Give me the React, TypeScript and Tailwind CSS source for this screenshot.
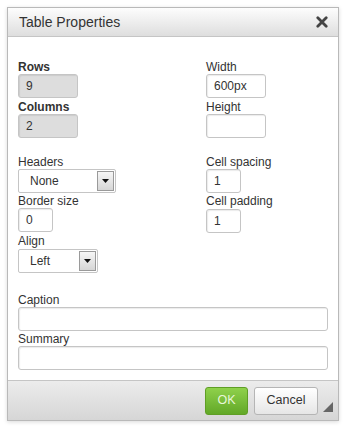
import React from "react";

const font = { fontFamily: '"Liberation Sans", Arial, sans-serif' };

function Label({ children, bold }: { children: React.ReactNode; bold?: boolean }) {
  return (
    <div className={`h-[14px] leading-[14px] text-[12px] text-[#333] ${bold ? "font-bold" : ""}`}>{children}</div>
  );
}

function Input({ w, value, disabled }: { w: string; value?: string; disabled?: boolean }) {
  return (
    <div
      className={`${w} h-[24px] border border-[#c5c5c5] rounded-[3px] flex items-center pl-[7px] text-[12px] text-[#333] shadow-[inset_1px_1px_1px_rgba(0,0,0,0.08)] ${
        disabled ? "bg-[#dddddd]" : "bg-white"
      }`}
    >
      {value}
    </div>
  );
}

function Select({ w, value }: { w: string; value: string }) {
  return (
    <div className={`${w} h-[24px] border border-[#c5c5c5] rounded-[2px] bg-white flex items-center text-[12px] text-[#333]`}>
      <div className="flex-1 pl-[11px]">{value}</div>
      <div className="w-[17px] h-[20px] mr-[1px] border border-[#9a9a9a] bg-gradient-to-b from-[#f6f6f6] to-[#d6d6d6] flex items-center justify-center">
        <svg width="7" height="4" viewBox="0 0 7 4">
          <path d="M0 0 L7 0 L3.5 4 Z" fill="#111" />
        </svg>
      </div>
    </div>
  );
}

export default function App() {
  return (
    <div className="w-[347px] h-[427px] bg-white pt-[7px] pl-[7px]" style={font}>
      <div className="w-[332px] h-[414px] border border-[#b9b9b9] flex flex-col shadow-[0_1px_4px_rgba(0,0,0,0.15)]">
        {/* header */}
        <div className="h-[29px] shrink-0 bg-gradient-to-b from-[#fdfdfd] to-[#dedede] border-b border-[#c5c5c5] flex items-center pl-[11px] pr-[10px]">
          <div className="flex-1 text-[14px] text-[#333]">Table Properties</div>
          <svg width="12" height="12" viewBox="0 0 12 12">
            <path d="M1.8 1.8 L10.2 10.2 M10.2 1.8 L1.8 10.2" stroke="#444" strokeWidth="2.8" strokeLinecap="round" />
          </svg>
        </div>
        {/* body */}
        <div className="flex-1 bg-white pt-[23px] px-[10px]">
          <div className="flex">
            <div className="w-[188px] flex flex-col">
              <Label bold>Rows</Label>
              <Input w="w-[60px]" value="9" disabled />
              <div className="mt-[2px]">
                <Label bold>Columns</Label>
              </div>
              <Input w="w-[60px]" value="2" disabled />
              <div className="mt-[17px]">
                <Label>Headers</Label>
              </div>
              <Select w="w-[98px]" value="None" />
              <div className="mt-[1px]">
                <Label>Border size</Label>
              </div>
              <Input w="w-[35px]" value="0" />
              <div className="mt-[2px]">
                <Label>Align</Label>
              </div>
              <div className="mt-[1px]">
                <Select w="w-[80px]" value="Left" />
              </div>
            </div>
            <div className="flex flex-col">
              <Label>Width</Label>
              <Input w="w-[60px]" value="600px" />
              <div className="mt-[2px]">
                <Label>Height</Label>
              </div>
              <Input w="w-[60px]" />
              <div className="mt-[17px]">
                <Label>Cell spacing</Label>
              </div>
              <Input w="w-[35px]" value="1" />
              <div className="mt-[1px]">
                <Label>Cell padding</Label>
              </div>
              <div className="mt-[1px]">
                <Input w="w-[35px]" value="1" />
              </div>
            </div>
          </div>
          <div className="mt-[20px]">
            <Label>Caption</Label>
          </div>
          <Input w="w-[310px]" />
          <div className="mt-[1px]">
            <Label>Summary</Label>
          </div>
          <Input w="w-[310px]" />
        </div>
        {/* footer */}
        <div className="h-[40px] shrink-0 bg-gradient-to-b from-[#ececec] to-[#d6d6d6] border-t border-[#c5c5c5] flex items-center justify-end pr-[20px] relative">
          <div className="w-[43px] h-[28px] rounded-[3px] border border-[#5f9e25] bg-gradient-to-b from-[#8fd14b] to-[#62a827] flex items-center justify-center text-[12.5px] text-[#e8f6d8]">
            OK
          </div>
          <div className="ml-[6px] w-[64px] h-[28px] rounded-[3px] border border-[#b5b5b5] bg-gradient-to-b from-[#ffffff] to-[#e6e6e6] flex items-center justify-center text-[12.5px] text-[#333]">
            Cancel
          </div>
          <svg className="absolute right-[5px] bottom-[8px]" width="10" height="10" viewBox="0 0 10 10">
            <path d="M10 0 L10 10 L0 10 Z" fill="#666" />
          </svg>
        </div>
      </div>
    </div>
  );
}
